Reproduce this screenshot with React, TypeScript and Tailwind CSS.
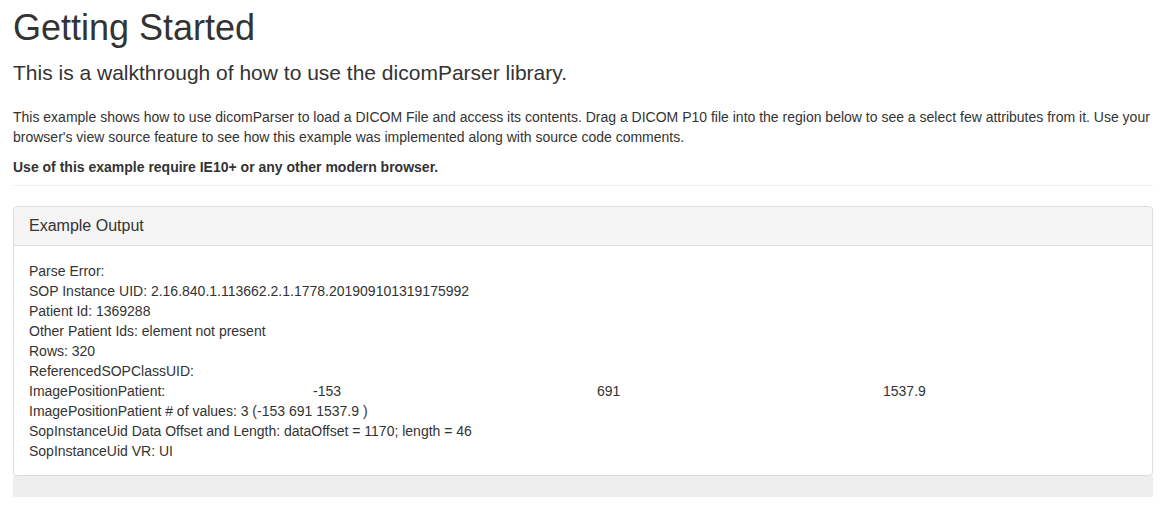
import React from 'react';

const lines: string[] = [
  'Parse Error:',
  'SOP Instance UID: 2.16.840.1.113662.2.1.1778.201909101319175992',
  'Patient Id: 1369288',
  'Other Patient Ids: element not present',
  'Rows: 320',
  'ReferencedSOPClassUID:',
];

const after: string[] = [
  'ImagePositionPatient # of values: 3 (-153 691 1537.9 )',
  'SopInstanceUid Data Offset and Length: dataOffset = 1170; length = 46',
  'SopInstanceUid VR: UI',
];

const App: React.FC = () => {
  return (
    <div className="min-h-[532px] bg-white text-[#333] text-[14px] leading-[20px] font-['Liberation_Sans',Arial,sans-serif]">
      <div className="ml-[13px] w-[1140px]">
        <h1 className="mt-[8px] mb-[10px] text-[36px] leading-[1.1] font-normal">Getting Started</h1>
        <p className="mb-[20px] text-[21px] leading-[1.4] font-light">
          This is a walkthrough of how to use the dicomParser library.
        </p>
        <p className="mb-[10px]">
          This example shows how to use dicomParser to load a DICOM File and access its contents. Drag a DICOM P10 file
          into the region below to see a select few attributes from it. Use your browser's view source feature to see how
          this example was implemented along with source code comments.
        </p>
        <p className="mb-[8px] font-bold">Use of this example require IE10+ or any other modern browser.</p>
        <hr className="border-0 border-t border-[#eee]" />

        <div className="mt-[20px] rounded-[4px] border border-[#ddd] bg-white shadow-[0_1px_1px_rgba(0,0,0,0.05)]">
          <div className="rounded-t-[3px] border-b border-[#ddd] bg-[#f5f5f5] px-[15px] py-[10px]">
            <h3 className="text-[16px] leading-[1.1] font-normal">Example Output</h3>
          </div>
          <div className="p-[15px] pb-[14px]">
            {lines.map((l) => (
              <div key={l}>{l}</div>
            ))}
            <div className="grid grid-cols-[284px_284px_286px_auto]">
              <span>ImagePositionPatient:</span>
              <span>-153</span>
              <span>691</span>
              <span>1537.9</span>
            </div>
            {after.map((l) => (
              <div key={l}>{l}</div>
            ))}
          </div>
        </div>
        <div className="h-[21px] bg-[#eee]" />
      </div>
    </div>
  );
};

export default App;
